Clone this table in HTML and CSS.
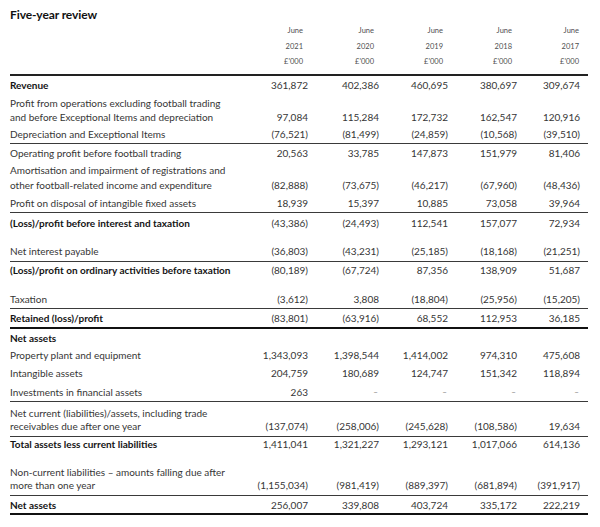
FILE: index.html
```html
<!DOCTYPE html>
<html lang="en">
<head>
<meta charset="utf-8">
<title>Five-year review</title>
<link rel="stylesheet" href="styles.css">
</head>
<body>
<div class="page">
  <h1 class="title">Five-year review</h1>
  <div class="row head">
    <div></div>
    <div class="hc">June<br>2021<br>£'000</div>
    <div class="hc">June<br>2020<br>£'000</div>
    <div class="hc">June<br>2019<br>£'000</div>
    <div class="hc">June<br>2018<br>£'000</div>
    <div class="hc last">June<br>2017<br>£'000</div>
  </div>

  <div class="row b r-rev"><div class="lab">Revenue</div><div>361,872</div><div>402,386</div><div>460,695</div><div>380,697</div><div>309,674</div></div>
  <div class="row r-pfo"><div class="lab">Profit from operations excluding football trading<br>and before Exceptional Items and depreciation</div><div>97,084</div><div>115,284</div><div>172,732</div><div>162,547</div><div>120,916</div></div>
  <div class="row line r-dep"><div class="lab">Depreciation and Exceptional Items</div><div>(76,521)</div><div>(81,499)</div><div>(24,859)</div><div>(10,568)</div><div>(39,510)</div></div>
  <div class="row r-op"><div class="lab">Operating profit before football trading</div><div>20,563</div><div>33,785</div><div>147,873</div><div>151,979</div><div>81,406</div></div>
  <div class="row r-am"><div class="lab">Amortisation and impairment of registrations and<br>other football-related income and expenditure</div><div>(82,888)</div><div>(73,675)</div><div>(46,217)</div><div>(67,960)</div><div>(48,436)</div></div>
  <div class="row line r-disp"><div class="lab">Profit on disposal of intangible fixed assets</div><div>18,939</div><div>15,397</div><div>10,885</div><div>73,058</div><div>39,964</div></div>
  <div class="row b r-lbi"><div class="lab">(Loss)/profit before interest and taxation</div><div>(43,386)</div><div>(24,493)</div><div>112,541</div><div>157,077</div><div>72,934</div></div>

  <div class="row line r-ni"><div class="lab">Net interest payable</div><div>(36,803)</div><div>(43,231)</div><div>(25,185)</div><div>(18,168)</div><div>(21,251)</div></div>
  <div class="row b r-lo"><div class="lab">(Loss)/profit on ordinary activities before taxation</div><div>(80,189)</div><div>(67,724)</div><div>87,356</div><div>138,909</div><div>51,687</div></div>

  <div class="row line r-tax"><div class="lab">Taxation</div><div>(3,612)</div><div>3,808</div><div>(18,804)</div><div>(25,956)</div><div>(15,205)</div></div>
  <div class="row b dbl r-ret"><div class="lab">Retained (loss)/profit</div><div>(83,801)</div><div>(63,916)</div><div>68,552</div><div>112,953</div><div>36,185</div></div>
  <div class="row b r-na"><div class="lab">Net assets</div></div>
  <div class="row r-ppe"><div class="lab">Property plant and equipment</div><div>1,343,093</div><div>1,398,544</div><div>1,414,002</div><div>974,310</div><div>475,608</div></div>
  <div class="row r-int"><div class="lab">Intangible assets</div><div>204,759</div><div>180,689</div><div>124,747</div><div>151,342</div><div>118,894</div></div>
  <div class="row line r-inv"><div class="lab">Investments in financial assets</div><div>263</div><div class="dash">–</div><div class="dash">–</div><div class="dash">–</div><div class="dash">–</div></div>
  <div class="row line r-nc"><div class="lab">Net current (liabilities)/assets, including trade<br>receivables due after one year</div><div>(137,074)</div><div>(258,006)</div><div>(245,628)</div><div>(108,586)</div><div>19,634</div></div>
  <div class="row b r-tot"><div class="lab">Total assets less current liabilities</div><div>1,411,041</div><div>1,321,227</div><div>1,293,121</div><div>1,017,066</div><div>614,136</div></div>

  <div class="row line r-ncl"><div class="lab">Non-current liabilities – amounts falling due after<br>more than one year</div><div>(1,155,034)</div><div>(981,419)</div><div>(889,397)</div><div>(681,894)</div><div>(391,917)</div></div>
  <div class="row b dbl r-net"><div class="lab">Net assets</div><div>256,007</div><div>339,808</div><div>403,724</div><div>335,172</div><div>222,219</div></div>
</div>
</body>
</html>
```

FILE: styles.css
```css
html, body {
  margin: 0;
  padding: 0;
  background: #ffffff;
}

.page {
  width: 578px;
  padding: 7px 12px 0 10px;
  font-family: Lato, "Noto Sans", sans-serif;
  font-size: 10px;
  color: #363636;
}

.title {
  margin: 0;
  font-size: 12px;
  line-height: 16px;
  font-weight: 700;
  letter-spacing: -0.1px;
  color: #111111;
}

.row {
  display: grid;
  grid-template-columns: 230px 68px 71px 69px 69px 63px;
  padding-right: 8px;
  align-items: end;
  line-height: 14px;
  text-align: right;
}

.row .lab {
  text-align: left;
}

.row.b {
  font-weight: 700;
  color: #141414;
}

.row.b > div:not(.lab) {
  font-weight: 400;
  color: #363636;
}

.row.line {
  border-bottom: 1px solid #3a3a3a;
}

.row.dbl {
  border-bottom: 2px solid #111111;
}

.head {
  font-size: 7.5px;
  line-height: 15.5px;
  color: #505050;
  padding-top: 0;
  padding-bottom: 4px;
  border-bottom: 2px solid #222222;
}

.hc {
  padding-right: 5px;
}

.hc.last {
  padding-right: 1px;
}

.row .dash {
  color: #777777;
  font-size: 8px;
  padding-right: 1px;
}

.r-rev { padding-top: 2px; }
.r-pfo { padding-top: 4px; }
.r-dep { padding-top: 3px; padding-bottom: 2px; }
.r-op { padding-top: 2px; }
.r-am { padding-top: 3px; line-height: 15px; }
.r-disp { padding-top: 3px; padding-bottom: 2px; }
.r-lbi { padding-top: 3px; }
.r-ni { padding-top: 14px; padding-bottom: 3px; }
.r-lo { padding-top: 1px; }
.r-tax { padding-top: 15px; padding-bottom: 2px; }
.r-ret { padding-top: 2px; padding-bottom: 2px; }
.r-na { padding-top: 2px; }
.r-ppe { padding-top: 3px; }
.r-int { padding-top: 4px; }
.r-inv { padding-top: 5px; padding-bottom: 2px; }
.r-nc { padding-top: 5px; padding-bottom: 3px; line-height: 13px; }
.r-tot { padding-top: 0; }
.r-ncl { padding-top: 15.5px; padding-bottom: 3.5px; line-height: 12.5px; }
.r-net { padding-top: 2px; padding-bottom: 1.5px; }
```
